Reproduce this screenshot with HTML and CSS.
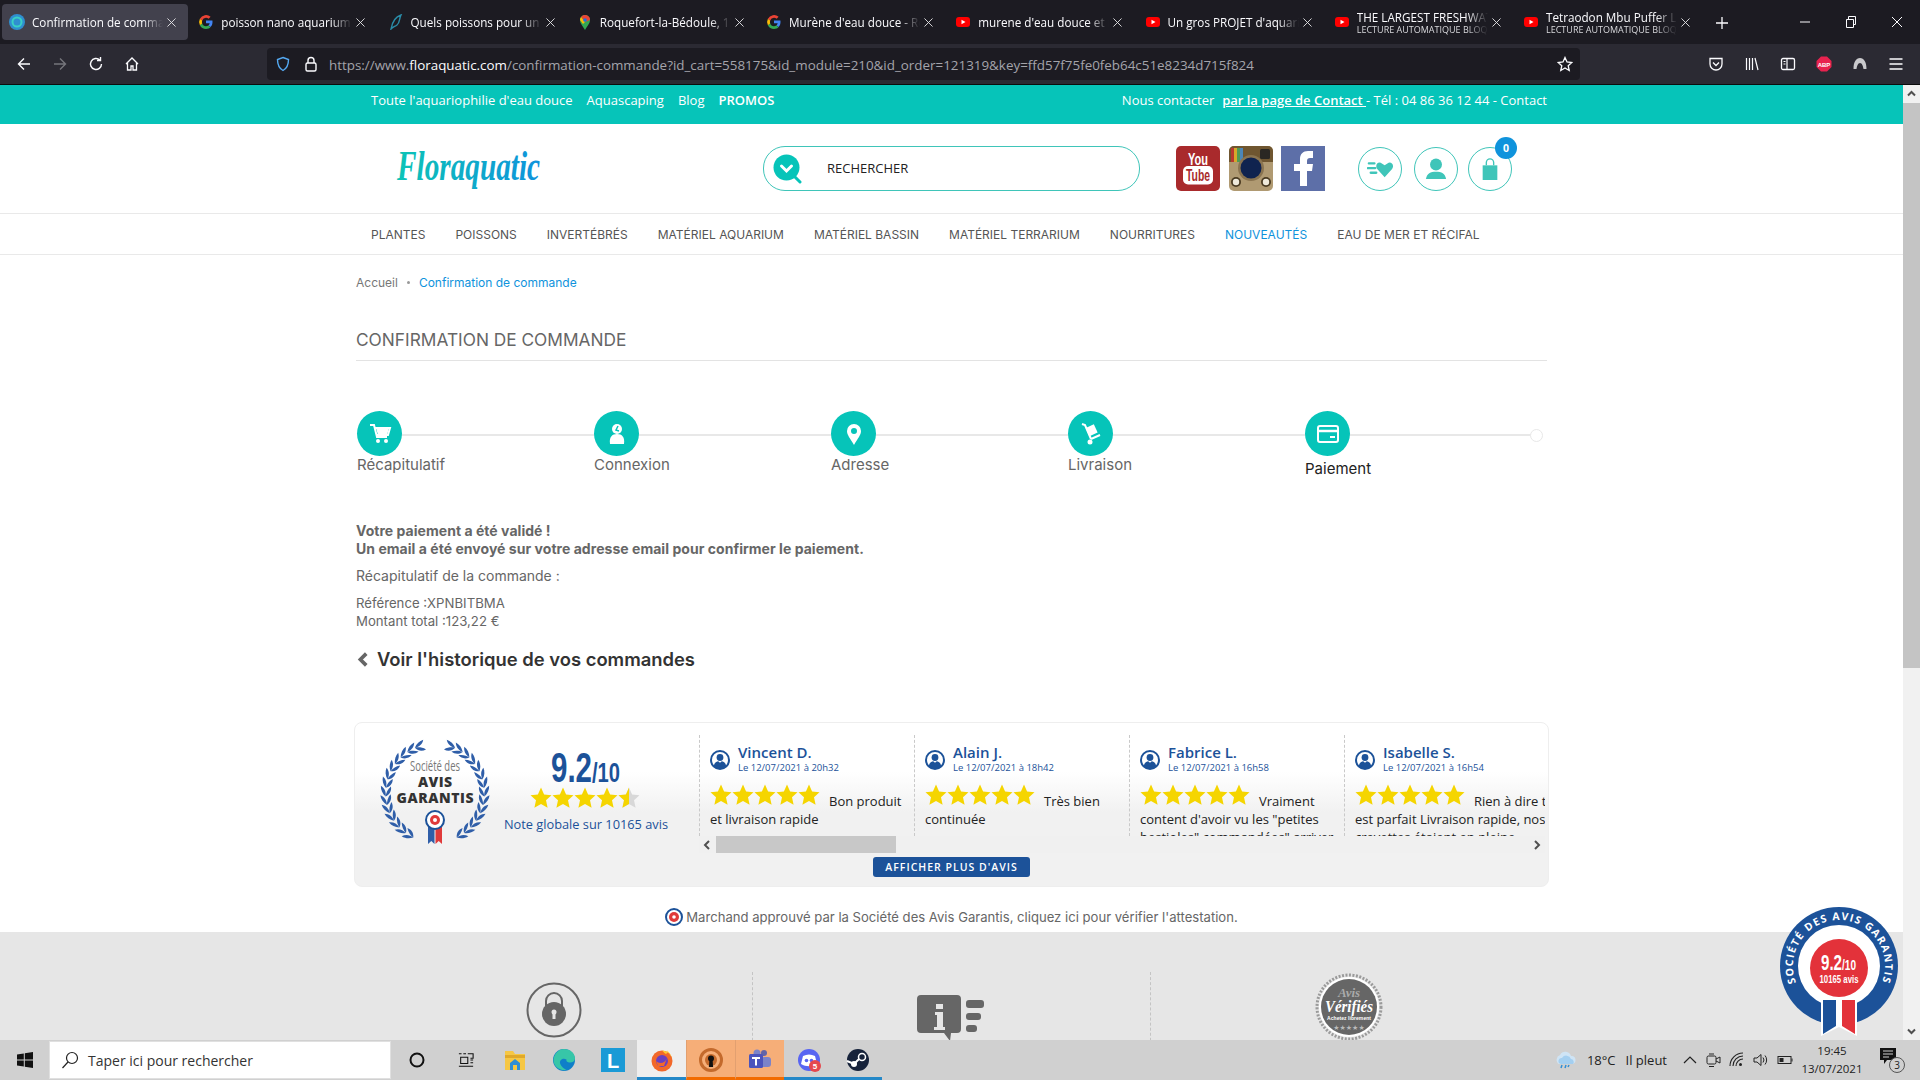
FILE: index.html
```html
<!DOCTYPE html>
<html lang="fr">
<head>
<meta charset="utf-8">
<title>Confirmation de commande</title>
<link rel="stylesheet" href="styles.css">
</head>
<body>
<svg class="sprite" aria-hidden="true">
  <defs>
    <linearGradient id="logo-grad" x1="0" x2="1" y1="0" y2="0"><stop offset="0" stop-color="#0cc4b6"/><stop offset="1" stop-color="#0f93dc"/></linearGradient>
    <clipPath id="half-star"><rect x="0" y="0" width="11" height="22"/></clipPath>
    <symbol id="tab-close" viewBox="0 0 10 10"><path d="M.5 .5l9 9M9.500 .5l-9 9" stroke="#e8e8ea" stroke-width="1" fill="none"/></symbol>
    <symbol id="fav-g" viewBox="0 0 16 16">
      <path d="M14.500 8c0-.5 0-1-.1-1.400H8v2.700h3.700a3.200 3.200 0 0 1-1.400 2.100l2.200 1.700c1.300-1.200 2-3 2-5.100z" fill="#4285f4"/>
      <path d="M8 15c1.900 0 3.500-.6 4.500-1.700l-2.200-1.700c-.6.4-1.400.7-2.300.7a4 4 0 0 1-3.800-2.800L1.900 11.200A7 7 0 0 0 8 15z" fill="#34a853"/>
      <path d="M4.200 9.500a4 4 0 0 1 0-3L1.900 4.800a7 7 0 0 0 0 6.400z" fill="#fbbc05"/>
      <path d="M8 3.800c1 0 1.900.4 2.600 1l2-2A7 7 0 0 0 1.900 4.800l2.300 1.700A4 4 0 0 1 8 3.800z" fill="#ea4335"/>
    </symbol>
    <symbol id="fav-yt" viewBox="0 0 16 16">
      <rect x="1" y="3" width="14" height="10" rx="3" fill="#f00"/><path d="M6.500 5.800v4.400L10.500 8z" fill="#fff"/>
    </symbol>
    <symbol id="star" viewBox="0 0 22 22">
      <path d="M11 .5l3.100 7 7.400.8-5.500 5 1.600 7.500L11 17l-6.600 3.800L6 13.300l-5.500-5 7.400-.8z" fill="#f5d500"/>
    </symbol>
    <symbol id="stars5" viewBox="0 0 110 22">
      <use href="#star" x="0" width="22" height="22"/><use href="#star" x="22" width="22" height="22"/><use href="#star" x="44" width="22" height="22"/><use href="#star" x="66" width="22" height="22"/><use href="#star" x="88" width="22" height="22"/>
    </symbol>
    <symbol id="rv-user" viewBox="0 0 20 20">
      <circle cx="10" cy="10" r="9" fill="none" stroke="#1c5299" stroke-width="2"/>
      <circle cx="10" cy="7.500" r="3.400" fill="#1c5299"/><path d="M3.800 16.500c.4-4 2.800-5 4.400-5.300l1.800 1.600 1.800-1.600c1.600.3 4 1.300 4.400 5.300a9 9 0 0 1-12.400 0z" fill="#1c5299"/>
    </symbol>
    <g id="leaf-pair"><path d="M56 .5c3-3 7-4.500 11-4-2.500 3.500-6.500 5-11 4z" fill="#2f5ea8"/><path d="M56 .5c3 .5 7 2.500 9.500 6-4.500 .5-8-2-9.500-6z" fill="#2f5ea8"/></g>
    <g id="laurel-side">
      <use href="#leaf-pair" transform="rotate(-24 56 50)"/><use href="#leaf-pair" transform="rotate(-34 56 50)"/><use href="#leaf-pair" transform="rotate(-44 56 50)"/><use href="#leaf-pair" transform="rotate(-54 56 50)"/><use href="#leaf-pair" transform="rotate(-64 56 50)"/><use href="#leaf-pair" transform="rotate(-74 56 50)"/><use href="#leaf-pair" transform="rotate(-84 56 50)"/><use href="#leaf-pair" transform="rotate(-94 56 50)"/><use href="#leaf-pair" transform="rotate(-104 56 50)"/><use href="#leaf-pair" transform="rotate(-114 56 50)"/><use href="#leaf-pair" transform="rotate(-124 56 50)"/><use href="#leaf-pair" transform="rotate(-134 56 50)"/><use href="#leaf-pair" transform="rotate(-144 56 50)"/><use href="#leaf-pair" transform="rotate(-154 56 50)"/>
    </g>
  </defs>
</svg>

<div class="screen">
  <header class="chrome">
    <div class="tabbar">
      <div class="tab tab-active">
        <svg class="fav" viewBox="0 0 16 16"><circle cx="8" cy="8" r="8" fill="#2f8fd0"/><circle cx="8" cy="8" r="4.500" fill="none" stroke="#39d0c4" stroke-width="2"/></svg>
        <span class="tab-title">Confirmation de commande</span><svg class="tab-x"><use href="#tab-close"/></svg>
      </div>
      <div class="tab"><svg class="fav"><use href="#fav-g"/></svg><span class="tab-title">poisson nano aquarium - Recherche</span><svg class="tab-x"><use href="#tab-close"/></svg></div>
      <div class="tab">
        <svg class="fav" viewBox="0 0 16 16"><path d="M3 15C4 9 7 3 13 1 11 5 12 9 9 11 7 12.500 5 13 3 15z" fill="none" stroke="#2a8ca8" stroke-width="1.400"/></svg>
        <span class="tab-title">Quels poissons pour un nano</span><svg class="tab-x"><use href="#tab-close"/></svg></div>
      <div class="tab">
        <svg class="fav" viewBox="0 0 16 16"><path d="M8 16C5 11 3 9 3 6a5 5 0 0 1 10 0c0 3-2 5-5 10z" fill="#34a853"/><path d="M4 3a5 5 0 0 1 9 3L8 8z" fill="#ea4335"/><path d="M3 6a5 5 0 0 1 1-3l4 5-2 2z" fill="#fbbc05"/><circle cx="8" cy="6" r="1.800" fill="#1a73e8"/></svg>
        <span class="tab-title">Roquefort-la-Bédoule, 13830</span><svg class="tab-x"><use href="#tab-close"/></svg></div>
      <div class="tab"><svg class="fav"><use href="#fav-g"/></svg><span class="tab-title">Murène d'eau douce - Recherche</span><svg class="tab-x"><use href="#tab-close"/></svg></div>
      <div class="tab"><svg class="fav"><use href="#fav-yt"/></svg><span class="tab-title">murene d'eau douce et marine</span><svg class="tab-x"><use href="#tab-close"/></svg></div>
      <div class="tab"><svg class="fav"><use href="#fav-yt"/></svg><span class="tab-title">Un gros PROJET d'aquarium</span><svg class="tab-x"><use href="#tab-close"/></svg></div>
      <div class="tab"><svg class="fav"><use href="#fav-yt"/></svg><span class="tab-title tab-two"><span class="tab-line">THE LARGEST FRESHWATER</span><span class="tab-sub">LECTURE AUTOMATIQUE BLOQUÉE</span></span><svg class="tab-x"><use href="#tab-close"/></svg></div>
      <div class="tab"><svg class="fav"><use href="#fav-yt"/></svg><span class="tab-title tab-two"><span class="tab-line">Tetraodon Mbu Puffer Large</span><span class="tab-sub">LECTURE AUTOMATIQUE BLOQUÉE</span></span><svg class="tab-x"><use href="#tab-close"/></svg></div>
      <svg class="newtab" viewBox="0 0 12 12"><path d="M6 0v12M0 6h12" stroke="#fbfbfe" stroke-width="1.300"/></svg>
      <div class="winctl">
        <svg class="win-btn" viewBox="0 0 46 20"><path d="M18 10h10" stroke="#fbfbfe"/></svg>
        <svg class="win-btn" viewBox="0 0 46 20"><path d="M18.500 7.500h7v8h-7zM20.500 7V4.500h7v8h-1.500" fill="none" stroke="#fbfbfe"/></svg>
        <svg class="win-btn" viewBox="0 0 46 20"><path d="M18 5l10 10M28 5L18 15" stroke="#fbfbfe"/></svg>
      </div>
    </div>
    <div class="toolbar">
      <svg class="tool" viewBox="0 0 16 16"><path d="M14 8H2.500M8 2.500L2.500 8 8 13.500" fill="none" stroke="#fbfbfe" stroke-width="1.400"/></svg>
      <svg class="tool" viewBox="0 0 16 16"><path d="M2 8h11.500M8 2.500L13.500 8 8 13.500" fill="none" stroke="#76767c" stroke-width="1.400"/></svg>
      <svg class="tool" viewBox="0 0 16 16"><path d="M13.500 8a5.500 5.500 0 1 1-1.700-4M12.500 1v3.500H9" fill="none" stroke="#fbfbfe" stroke-width="1.400"/></svg>
      <svg class="tool" viewBox="0 0 16 16"><path d="M2 8l6-6 6 6M3.500 7v7h3.500v-4h2v4h3.500V7" fill="none" stroke="#fbfbfe" stroke-width="1.300"/></svg>
      <div class="urlbar">
        <svg class="url-shield" viewBox="0 0 16 16"><path d="M8 1.500l5.500 2c0 5-1 8.500-5.500 11-4.500-2.500-5.500-6-5.500-11z" fill="none" stroke="#54a9f2" stroke-width="1.400"/></svg>
        <svg class="url-lock" viewBox="0 0 16 16"><rect x="3" y="7" width="10" height="8" rx="1.500" fill="none" stroke="#fbfbfe" stroke-width="1.400"/><path d="M5 7V4.500a3 3 0 0 1 6 0V7" fill="none" stroke="#fbfbfe" stroke-width="1.400"/></svg>
        <span class="url-text">https://www.<b class="url-host">floraquatic.com</b>/confirmation-commande?id_cart=558175&amp;id_module=210&amp;id_order=121319&amp;key=ffd57f75fe0feb64c51e8234d715f824</span>
        <svg class="url-star" viewBox="0 0 16 16"><path d="M8 1.500l2 4.500 4.800.5-3.600 3.200 1 4.800L8 12l-4.200 2.500 1-4.800L1.200 6.500 6 6z" fill="none" stroke="#fbfbfe" stroke-width="1.300"/></svg>
      </div>
      <div class="tool-right">
        <svg class="tool" viewBox="0 0 16 16"><path d="M2 2.500h12V8a6 6 0 0 1-12 0z" fill="none" stroke="#fbfbfe" stroke-width="1.300"/><path d="M5 6.500l3 3 3-3" fill="none" stroke="#fbfbfe" stroke-width="1.300"/></svg>
        <svg class="tool" viewBox="0 0 16 16"><path d="M2.500 2v12M5.500 2v12M8.500 2v12M11 2l3 12" fill="none" stroke="#fbfbfe" stroke-width="1.200"/></svg>
        <svg class="tool" viewBox="0 0 16 16"><rect x="1.500" y="2.500" width="13" height="11" rx="1.500" fill="none" stroke="#fbfbfe" stroke-width="1.300"/><path d="M7 2.500v11M3.500 5.500h2M3.500 8h2" stroke="#fbfbfe" stroke-width="1.200"/></svg>
        <svg class="tool" viewBox="0 0 16 16"><path d="M5 .5h6L15.500 5v6L11 15.500H5L.5 11V5z" fill="#e8224f"/><text x="8" y="10.500" class="abp-text" text-anchor="middle">ABP</text></svg>
        <svg class="tool" viewBox="0 0 16 16"><path d="M8 2c4 0 6.500 4 6.500 11h-3C11 10 10 7 8 7s-3 3-3.500 6h-3C1.500 6 4 2 8 2z" fill="#c9c9cc"/></svg>
        <svg class="tool" viewBox="0 0 16 16"><path d="M1.500 3h13M1.500 8h13M1.500 13h13" stroke="#fbfbfe" stroke-width="1.400"/></svg>
      </div>
    </div>
  </header>

  <div class="viewport">
    <main class="page">
      <div class="topbar">
        <div class="wrap topbar-in">
          <nav class="top-left"><a>Toute l'aquariophilie d'eau douce</a><a>Aquascaping</a><a>Blog</a><a class="strong">PROMOS</a></nav>
          <div class="top-right">Nous contacter&nbsp; <a class="strong under">par la page de Contact </a> - Tél : 04 86 36 12 44 - Contact</div>
        </div>
      </div>

      <div class="wrap site-head">
        <svg class="logo" viewBox="0 0 146 44"><text x="1" y="33" class="logo-text" textLength="143" lengthAdjust="spacingAndGlyphs" fill="url(#logo-grad)">Floraquatic</text></svg>
        <div class="search">
          <svg class="search-ico" viewBox="0 0 30 30"><path d="M20 21l7 7" stroke="#06c4b9" stroke-width="3" stroke-linecap="round"/><circle cx="13.500" cy="13.500" r="13" fill="#06c4b9"/><path d="M8.500 12l5 5 5-5" fill="none" stroke="#fff" stroke-width="3" stroke-linecap="round"/></svg>
          <span class="search-label">RECHERCHER</span>
        </div>
        <div class="social">
          <svg class="soc" viewBox="0 0 44 45"><rect width="44" height="45" rx="5" fill="#a92a2c"/><text x="22" y="18.500" class="yt-you" text-anchor="middle" textLength="20" lengthAdjust="spacingAndGlyphs">You</text><rect x="7" y="20" width="30" height="18.500" rx="5" fill="#fff"/><text x="22" y="35" class="yt-tube" text-anchor="middle" textLength="24" lengthAdjust="spacingAndGlyphs">Tube</text></svg>
          <svg class="soc" viewBox="0 0 44 45"><rect width="44" height="45" rx="5" fill="#b09a72"/><path d="M0 5a5 5 0 0 1 5-5h34a5 5 0 0 1 5 5v11H0z" fill="#6f5630"/><rect x="2" y="2" width="3" height="14" fill="#b8392f"/><rect x="5" y="2" width="3" height="14" fill="#d6a82a"/><rect x="8" y="2" width="3" height="14" fill="#4f9a55"/><rect x="11" y="2" width="3" height="14" fill="#4b86b8"/><rect x="31" y="3" width="10" height="10" rx="1.500" fill="#2a2723"/><circle cx="22" cy="22" r="13" fill="#8a7450"/><circle cx="22" cy="22" r="10.500" fill="#10234f"/><circle cx="7" cy="36" r="5" fill="#4a3b22"/><circle cx="7" cy="36" r="3.200" fill="#efeadb"/><circle cx="37" cy="36" r="5" fill="#4a3b22"/><circle cx="37" cy="36" r="3.200" fill="#efeadb"/></svg>
          <svg class="soc" viewBox="0 0 44 45"><rect width="44" height="45" fill="#5d6fa8"/><path d="M19 40V25h-6v-7h6v-5c0-5 3-8 8-8h5v7h-3c-2 0-3 1-3 3v3h6l-1 7h-5v15z" fill="#fff"/></svg>
        </div>
        <div class="actions">
          <div class="act"><svg class="act-ico" viewBox="0 0 28 20"><path d="M19 19L11 10c-3-4 1-9 5-6l3 2 3-2c4-3 8 2 5 6z" fill="#3fc5b9"/><path d="M2 4h6M1 9h8M4 14h6" stroke="#3fc5b9" stroke-width="2.500" stroke-linecap="round"/></svg></div>
          <div class="act"><svg class="act-ico" viewBox="0 0 28 24"><circle cx="14" cy="7" r="6.500" fill="#3fc5b9"/><path d="M3 23c1-6 5-8 11-8s10 2 11 8z" fill="#3fc5b9"/></svg></div>
          <div class="act act-cart"><svg class="act-ico" viewBox="0 0 28 24"><path d="M10 8V5a4 4 0 0 1 8 0v3" fill="none" stroke="#3fc5b9" stroke-width="1.500"/><rect x="6" y="8" width="16" height="16" fill="#3fc5b9"/></svg><span class="cart-count">0</span></div>
        </div>
      </div>

      <nav class="mainnav">
        <div class="wrap mainnav-in">
          <a>PLANTES</a><a>POISSONS</a><a>INVERTÉBRÉS</a><a>MATÉRIEL AQUARIUM</a><a>MATÉRIEL BASSIN</a><a>MATÉRIEL TERRARIUM</a><a>NOURRITURES</a><a class="nav-new">NOUVEAUTÉS</a><a>EAU DE MER ET RÉCIFAL</a>
        </div>
      </nav>

      <div class="wrap">
        <div class="crumbs"><a>Accueil</a><span class="crumb-dot"></span><a class="crumb-now">Confirmation de commande</a></div>
        <h1 class="title">CONFIRMATION DE COMMANDE</h1>

        <div class="steps">
          <div class="step"><span class="step-dot"><svg viewBox="0 0 24 24"><path d="M2 3h4l3 12h10M7 6h15l-2 7H9" fill="none" stroke="#fff" stroke-width="2"/><path d="M8 6h13l-2 7H10z" fill="#fff"/><circle cx="10" cy="19" r="2" fill="#fff"/><circle cx="18" cy="19" r="2" fill="#fff"/></svg></span><span class="step-label">Récapitulatif</span></div>
          <div class="step"><span class="step-dot"><svg viewBox="0 0 24 24"><circle cx="12" cy="7" r="5" fill="#fff"/><path d="M5 22c-1-7 2-10 7-10s8 3 7 10z" fill="#fff"/><path d="M13 4l-2 4 3 1" fill="none" stroke="#06c4b9" stroke-width="1.500"/></svg></span><span class="step-label">Connexion</span></div>
          <div class="step"><span class="step-dot"><svg viewBox="0 0 24 24"><path fill-rule="evenodd" d="M12 23C8 16 5 13 5 9a7 7 0 0 1 14 0c0 4-3 7-7 14zm0-11a3 3 0 1 0 0-6 3 3 0 0 0 0 6z" fill="#fff"/></svg></span><span class="step-label">Adresse</span></div>
          <div class="step"><span class="step-dot"><svg viewBox="0 0 24 24"><path d="M3 2l3 1 6 14" fill="none" stroke="#fff" stroke-width="2"/><rect x="8" y="4" width="9" height="9" transform="rotate(-25 12 8)" fill="#fff"/><path d="M12 17l9-4" stroke="#fff" stroke-width="2"/><circle cx="11" cy="20" r="2.500" fill="#fff"/></svg></span><span class="step-label">Livraison</span></div>
          <div class="step step-current"><span class="step-dot"><svg viewBox="0 0 24 24"><rect x="2" y="4" width="20" height="16" rx="2" fill="none" stroke="#fff" stroke-width="2"/><path d="M2 9h20" stroke="#fff" stroke-width="2.500"/><path d="M14 14h5v2h-5z" fill="#fff"/></svg></span><span class="step-label">Paiement</span></div>
          <span class="step-end"></span>
        </div>

        <section class="message">
          <p class="msg-strong">Votre paiement a été validé !<br>Un email a été envoyé sur votre adresse email pour confirmer le paiement.</p>
          <p class="msg-recap">Récapitulatif de la commande :</p>
          <p class="msg-lines">Référence :XPNBITBMA<br>Montant total :123,22 €</p>
          <a class="history"><svg class="history-ico" viewBox="0 0 10 14"><path d="M8.500 1.500L3 7l5.500 5.500" fill="none" stroke="#666" stroke-width="3.400"/></svg>Voir l'historique de vos commandes</a>
        </section>

        <section class="reviews">
          <div class="rv-top">
            <div class="rv-left">
              <svg class="laurel" viewBox="0 0 112 100">
                <use href="#laurel-side"/>
                <use href="#laurel-side" transform="matrix(-1 0 0 1 112 0)"/>
                <text x="56" y="28" class="lau-soc" text-anchor="middle" textLength="50" lengthAdjust="spacingAndGlyphs">Société des</text>
                <text x="56" y="44" class="lau-big" text-anchor="middle" textLength="34">AVIS</text>
                <text x="56" y="60" class="lau-big" text-anchor="middle" textLength="77">GARANTIS</text>
                <path d="M49 84h6.500v17l-3.200-3-3.300 3z" fill="#2f5ea8"/><path d="M56.500 84H63v17l-3.300-3-3.200 3z" fill="#e03a3a"/>
                <circle cx="56" cy="77" r="9" fill="#fff" stroke="#1c5299" stroke-width="2"/><circle cx="56" cy="77" r="5" fill="#e03a3a"/><circle cx="56" cy="77" r="2" fill="#fff"/>
              </svg>
              <div class="rv-score">
                <svg class="score-num" viewBox="0 0 70 42"><text x="0" y="37" class="score-big" textLength="41" lengthAdjust="spacingAndGlyphs">9.2</text><text x="41" y="37" class="score-small" textLength="28" lengthAdjust="spacingAndGlyphs">/10</text></svg>
                <svg class="score-stars" viewBox="0 0 110 22">
                  <use href="#star" width="22" height="22"/><use href="#star" x="22" width="22" height="22"/><use href="#star" x="44" width="22" height="22"/><use href="#star" x="66" width="22" height="22"/>
                  <g transform="translate(88 0)"><path d="M11 .5l3.100 7 7.400.8-5.500 5 1.600 7.500L11 17l-6.600 3.800L6 13.300l-5.500-5 7.400-.8z" fill="#d8d8d8"/><use href="#star" width="22" height="22" clip-path="url(#half-star)"/></g>
                </svg>
                <div class="score-note">Note globale sur 10165 avis</div>
              </div>
            </div>
            <div class="rv-right">
              <div class="rv-list">
                <article class="rv-card">
                  <div class="rv-head"><svg class="rv-avatar"><use href="#rv-user"/></svg><div><div class="rv-name">Vincent D.</div><div class="rv-date">Le 12/07/2021 à 20h32</div></div></div>
                  <p class="rv-text"><svg class="rv-stars"><use href="#stars5"/></svg>Bon produit<br>et livraison rapide</p>
                </article>
                <article class="rv-card">
                  <div class="rv-head"><svg class="rv-avatar"><use href="#rv-user"/></svg><div><div class="rv-name">Alain J.</div><div class="rv-date">Le 12/07/2021 à 18h42</div></div></div>
                  <p class="rv-text"><svg class="rv-stars"><use href="#stars5"/></svg>Très bien<br>continuée</p>
                </article>
                <article class="rv-card">
                  <div class="rv-head"><svg class="rv-avatar"><use href="#rv-user"/></svg><div><div class="rv-name">Fabrice L.</div><div class="rv-date">Le 12/07/2021 à 16h58</div></div></div>
                  <p class="rv-text"><svg class="rv-stars"><use href="#stars5"/></svg>Vraiment<br>content d'avoir vu les "petites<br>bestioles" commandées" arriver</p>
                </article>
                <article class="rv-card">
                  <div class="rv-head"><svg class="rv-avatar"><use href="#rv-user"/></svg><div><div class="rv-name">Isabelle S.</div><div class="rv-date">Le 12/07/2021 à 16h54</div></div></div>
                  <p class="rv-text"><svg class="rv-stars"><use href="#stars5"/></svg>Rien à dire tout<br>est parfait Livraison rapide, nos<br>crevettes étaient en pleine</p>
                </article>
              </div>
              <div class="rv-scroll">
                <svg class="rv-arrow" viewBox="0 0 8 10"><path d="M6 1L2 5l4 4" fill="none" stroke="#505050" stroke-width="2"/></svg>
                <span class="rv-thumb"></span>
                <svg class="rv-arrow rv-arrow-r" viewBox="0 0 8 10"><path d="M2 1l4 4-4 4" fill="none" stroke="#505050" stroke-width="2"/></svg>
              </div>
            </div>
          </div>
          <a class="rv-btn">AFFICHER PLUS D'AVIS</a>
        </section>

        <p class="attest">
          <svg class="attest-ico" viewBox="0 0 18 18"><circle cx="9" cy="9" r="8" fill="#fff" stroke="#1c5299" stroke-width="2"/><circle cx="9" cy="9" r="5" fill="#e03a3a"/><circle cx="9" cy="9" r="1.800" fill="#fff"/></svg>
          Marchand approuvé par la Société des Avis Garantis, cliquez ici pour vérifier l'attestation.
        </p>
      </div>

      <footer class="trust">
        <div class="wrap trust-in">
          <div class="trust-col">
            <svg class="ico-lock" viewBox="0 0 56 56"><circle cx="28" cy="28" r="26.500" fill="none" stroke="#666" stroke-width="2"/><path d="M20 26v-7a8 8 0 0 1 16 0v7" fill="none" stroke="#666" stroke-width="2"/><circle cx="28" cy="32" r="12" fill="#666"/><circle cx="28" cy="30" r="2.500" fill="#e6e6e6"/><path d="M26.500 30h3v7h-3z" fill="#e6e6e6"/></svg>
          </div>
          <div class="trust-col">
            <svg class="ico-info" viewBox="0 0 68 46"><path d="M4 0h36a4 4 0 0 1 4 4v30a4 4 0 0 1-4 4H34l-1 8-6-8H4a4 4 0 0 1-4-4V4a4 4 0 0 1 4-4z" fill="#666"/><rect x="19" y="9" width="7" height="5" fill="#e6e6e6"/><path d="M18 17h8v15h2v3H17v-3h3V20h-2z" fill="#e6e6e6"/><rect x="49" y="5" width="18" height="8" rx="3" fill="#666"/><rect x="49" y="18" width="15" height="7" rx="3" fill="#666"/><rect x="49" y="30" width="11" height="7" rx="3" fill="#666"/></svg>
          </div>
          <div class="trust-col">
            <svg class="ico-verif" viewBox="0 0 68 68"><circle cx="34" cy="34" r="32" fill="none" stroke="#9a9a9a" stroke-width="3" stroke-dasharray="2 1.500"/><circle cx="34" cy="34" r="30" fill="#fff"/><circle cx="34" cy="34" r="28" fill="#666"/><text x="34" y="24" class="verif-a" text-anchor="middle">Avis</text><text x="34" y="39" class="verif-b" text-anchor="middle" textLength="48" lengthAdjust="spacingAndGlyphs">Vérifiés</text><text x="34" y="47" class="verif-c" text-anchor="middle" textLength="44">Achetez librement</text><text x="34" y="57" class="verif-d" text-anchor="middle">★★★★★</text></svg>
          </div>
        </div>
      </footer>
    </main>

    <div class="vscroll">
      <svg class="vs-btn" viewBox="0 0 17 18"><path d="M5 10.500l3.500-3.500 3.500 3.500" fill="none" stroke="#505050" stroke-width="2"/></svg>
      <span class="vs-thumb"></span>
      <span class="vs-fill"></span>
      <svg class="vs-btn" viewBox="0 0 17 18"><path d="M5 7.500l3.500 3.500 3.500-3.500" fill="none" stroke="#505050" stroke-width="2"/></svg>
    </div>

    <svg class="float-badge" viewBox="0 0 120 132">
      <path id="badge-arc" d="M60 106A46 46 0 1 1 60 14A46 46 0 1 1 60 106" fill="none"/>
      <circle cx="60" cy="60" r="59" fill="#1c5299"/>
      <circle cx="60" cy="60" r="41" fill="#fff"/>
      <circle cx="60" cy="62" r="29" fill="#e3323a"/>
      <path d="M42 92h36v38l-18-9-18 9z" fill="#fff"/>
      <path d="M44 94h13v26l-13 8z" fill="#1c5299"/>
      <path d="M63 94h13v34l-13-8z" fill="#e3323a"/>
      <text class="badge-ring"><textPath href="#badge-arc" startOffset="50%" text-anchor="middle">SOCIÉTÉ DES AVIS GARANTIS</textPath></text>
      <text x="42" y="64" class="badge-big" textLength="21" lengthAdjust="spacingAndGlyphs">9.2</text>
      <text x="63" y="64" class="badge-sm" textLength="14" lengthAdjust="spacingAndGlyphs">/10</text>
      <text x="60" y="77" class="badge-note" text-anchor="middle" textLength="39" lengthAdjust="spacingAndGlyphs">10165 avis</text>
    </svg>
  </div>

  <footer class="taskbar">
    <div class="task-start"><svg class="task-ico" viewBox="0 0 16 16"><path d="M0 2.500L6.800 1.500V7.500H0zM7.800 1.300L16 0V7.500H7.800zM0 8.500H6.800V14.500L0 13.500zM7.800 8.500H16V16L7.800 14.700z" fill="#111"/></svg></div>
    <div class="task-search">
      <svg class="task-mag" viewBox="0 0 18 18"><circle cx="11" cy="7" r="5.500" fill="none" stroke="#222" stroke-width="1.200"/><path d="M7 11l-5.500 6" stroke="#222" stroke-width="1.200"/></svg>
      <span class="task-search-text">Taper ici pour rechercher</span>
    </div>
    <div class="task-apps">
      <div class="task-cell"><svg class="task-ico" viewBox="0 0 16 16"><circle cx="8" cy="8" r="6.500" fill="none" stroke="#111" stroke-width="2"/></svg></div>
      <div class="task-cell"><svg class="task-ico" viewBox="0 0 18 18"><path d="M1 2h3M6 2h3M11 2h6v5h-3M1 16h16M3 6h8v7H3zM14 9h3M14 12h3" fill="none" stroke="#111" stroke-width="1.200"/></svg></div>
      <div class="task-cell"><svg class="task-ico-l" viewBox="0 0 24 24"><path d="M2 3h8l2 3h10v16H2z" fill="#f6c744"/><path d="M2 7h20v3H2z" fill="#e0a92a"/><path d="M7 22v-7l5-4 5 4v7z" fill="#2f8fd6"/><rect x="10" y="17" width="4" height="5" fill="#f6c744"/></svg></div>
      <div class="task-cell"><svg class="task-ico-l" viewBox="0 0 24 24"><circle cx="12" cy="12" r="11" fill="#0f7fc9"/><path d="M1.500 11C3 4 8 1 12 1c6 0 11 4 11 9.500 0 3-3 4.500-6 4-2-.4-3-1.500-2.500-3-4-2-8 1-6 5 1 2 3 4 6 5.500C7 23 1 18 1.500 11z" fill="#37c6a8"/></svg></div>
      <div class="task-cell"><svg class="task-ico-l" viewBox="0 0 24 24"><rect width="24" height="24" fill="#1a9ad6"/><text x="12" y="20" class="task-l" text-anchor="middle">L</text></svg></div>
      <div class="task-cell task-light task-under-b"><svg class="task-ico-l" viewBox="0 0 24 24"><circle cx="12" cy="13" r="10.500" fill="#f2682a"/><path d="M12 2.500c5 0 10 4 10 10 0-3-1-7-5-10 1 2 0 4-2 3z" fill="#ffcb2f"/><circle cx="12" cy="13" r="6" fill="#6b3fc0"/><path d="M6 13c3 3 9 3 11-3l-3 8H8z" fill="#f2682a"/></svg></div>
      <div class="task-cell task-orange task-under-o"><svg class="task-ico-l" viewBox="0 0 24 24"><circle cx="12" cy="12" r="10.500" fill="none" stroke="#c46a2c" stroke-width="3"/><circle cx="12" cy="12" r="6" fill="#c46a2c"/><circle cx="12" cy="10.500" r="3" fill="#111"/><path d="M10.500 11h3l.6 8h-4.200z" fill="#111"/></svg></div>
      <div class="task-cell task-orange task-under-o"><svg class="task-ico-l" viewBox="0 0 24 24"><circle cx="16" cy="5" r="3" fill="#6264a7"/><rect x="13" y="9" width="10" height="10" rx="3" fill="#7b83c9"/><circle cx="9" cy="5" r="3.500" fill="#7b83c9"/><rect x="1" y="6" width="14" height="14" rx="1.500" fill="#4b53bc"/><path d="M4 9h8v2H9v6.500H7V11H4z" fill="#fff"/></svg></div>
      <div class="task-cell task-under-b"><svg class="task-ico-l" viewBox="0 0 24 24"><circle cx="12" cy="12" r="11" fill="#5865f2"/><path d="M6 8c4-2 8-2 12 0l2 8c-5 3-11 3-16 0z" fill="#fff"/><circle cx="9.500" cy="12.500" r="1.800" fill="#5865f2"/><circle cx="14.500" cy="12.500" r="1.800" fill="#5865f2"/><circle cx="18" cy="18" r="6" fill="#e5484d"/><text x="18" y="21" class="task-5" text-anchor="middle">5</text></svg></div>
      <div class="task-cell task-under-b"><svg class="task-ico-l" viewBox="0 0 24 24"><circle cx="12" cy="12" r="11" fill="#16223a"/><circle cx="16" cy="9" r="3.500" fill="none" stroke="#fff" stroke-width="1.500"/><circle cx="8" cy="16" r="3" fill="#fff"/><path d="M1 13l6 2.500M9 15l4-4" stroke="#fff" stroke-width="2"/></svg></div>
    </div>
    <div class="tray">
      <svg class="tray-weather" viewBox="0 0 24 20"><path d="M6 14a5 5 0 0 1 1-9 6 6 0 0 1 11 1 4 4 0 0 1 1 8z" fill="#cfe4f5"/><path d="M8 14a3 3 0 0 1 1-6 5 5 0 0 1 9 1 3 3 0 0 1 2 5z" fill="#a4cff0"/><path d="M9 15l-1 3M13 15l-1 3M16 15l-1 2" stroke="#2f8fd6" stroke-width="1.500"/></svg>
      <span class="tray-temp">18°C</span><span class="tray-rain">Il pleut</span>
      <svg class="tray-ico tray-chev" viewBox="0 0 14 14"><path d="M1 10l6-6 6 6" fill="none" stroke="#222" stroke-width="1.200"/></svg>
      <svg class="tray-ico" viewBox="0 0 16 16"><rect x="2" y="4" width="9" height="8" rx="1.500" fill="none" stroke="#222"/><path d="M11 7l4-2v6l-4-2M4 2h5M4 14.500h5" fill="none" stroke="#222"/></svg>
      <svg class="tray-ico" viewBox="0 0 16 16"><path d="M1 14a13 13 0 0 1 13-13M4 14a10 10 0 0 1 10-10M7 14a7 7 0 0 1 7-7" fill="none" stroke="#222" stroke-width="1.100"/><circle cx="11.500" cy="12.500" r="1.500" fill="#222"/></svg>
      <svg class="tray-ico" viewBox="0 0 16 16"><path d="M1 6h3l4-3.500v11L4 10H1z" fill="none" stroke="#222"/><path d="M10 5.500a4 4 0 0 1 0 5M12 3.500a7 7 0 0 1 0 9" fill="none" stroke="#222"/></svg>
      <svg class="tray-ico" viewBox="0 0 16 16"><rect x="1" y="4.500" width="13" height="7" fill="none" stroke="#222"/><rect x="2.500" y="6" width="4" height="4" fill="#222"/><path d="M15 6.500v3" stroke="#222"/></svg>
      <div class="tray-clock"><span>19:45</span><span>13/07/2021</span></div>
      <div class="tray-notif"><svg class="notif-ico" viewBox="0 0 18 18"><path d="M1 1h16v12H8l-3 4v-4H1z" fill="#111"/><path d="M4 4h10M4 7h10M4 10h6" stroke="#d0d0d0"/></svg><span class="notif-count">3</span></div>
    </div>
  </footer>
</div>
</body>
</html>
```

FILE: styles.css
```css
* { box-sizing: border-box; }
html, body { margin: 0; height: 100%; overflow: hidden; }
body { font-family: Inter, "Liberation Sans", sans-serif; color: #666; background: #fff; }
a { color: inherit; text-decoration: none; }
p, h1 { margin: 0; }
.sprite { position: absolute; width: 0; height: 0; }
.screen { display: flex; flex-direction: column; height: 1080px; width: 1920px; }

/* browser chrome */
.chrome { flex: none; font-family: "Open Sans", "Noto Sans", sans-serif; }
.tabbar { height: 44px; background: #1c1b22; display: flex; align-items: flex-start; padding: 4px 0 0 2px; gap: 3.25px; }
.tab { width: 186px; height: 36px; display: flex; align-items: center; padding-left: 7px; border-radius: 4px; color: #fbfbfe; font-size: 11.7px; flex: none; }
.tab-active { background: #42414d; }
.fav { width: 16px; height: 16px; flex: none; }
.tab-title { margin-left: 7px; width: 131px; overflow: hidden; white-space: nowrap; -webkit-mask-image: linear-gradient(90deg, #000 84%, transparent); mask-image: linear-gradient(90deg, #000 84%, transparent); }
.tab-two { display: flex; flex-direction: column; line-height: 14px; padding-top: 2px; }
.tab-sub { font-size: 9px; line-height: 12px; color: #d8d8dc; }
.tab-x { margin-left: 4px; width: 9px; height: 9px; flex: none; }
.newtab { width: 12px; height: 12px; margin: 13px 0 0 11px; flex: none; }
.winctl { margin-left: auto; display: flex; align-self: center; margin-top: -4px; }
.win-btn { width: 46px; height: 20px; display: block; }
.toolbar { height: 41px; background: #2b2a33; border-bottom: 1px solid #0c0c0d; display: flex; align-items: center; padding: 0 6px; }
.tool { width: 36px; height: 16px; flex: none; }
.urlbar { margin-left: 117px; width: 1313px; height: 32px; background: #1c1b22; border-radius: 4px; display: flex; align-items: center; padding-left: 8px; flex: none; }
.url-shield { width: 16px; height: 16px; flex: none; }
.url-lock { width: 16px; height: 16px; margin-left: 12px; flex: none; }
.url-text { margin-left: 10px; padding-top: 2px; font-size: 13.4px; color: #a4a4ab; white-space: nowrap; }
.url-host { color: #fbfbfe; font-weight: 400; }
.url-star { width: 16px; height: 16px; margin-left: auto; margin-right: 7px; flex: none; }
.tool-right { margin-left: 118px; display: flex; flex: none; }
.abp-text { font: 700 6px "Liberation Sans", sans-serif; fill: #fff; }

/* page */
.viewport { flex: 1; display: flex; min-height: 0; position: relative; }
.page { flex: 1; min-width: 0; overflow: hidden; }
.wrap { width: 1191px; margin: 0 auto; }
.topbar { height: 39px; background: #06c4b9; color: #fff; font: 13px/31px "Open Sans", sans-serif; }
.topbar-in { display: flex; justify-content: space-between; padding-left: 15px; }
.top-left { display: flex; gap: 14px; }
.strong { font-weight: 600; }
.under { text-decoration: underline; margin-left: 1px; }

.site-head { height: 89px; display: flex; align-items: center; }
.logo { width: 146px; height: 44px; margin-left: 40px; flex: none; }
.logo-text { font: italic 700 42px "Liberation Serif", serif; }
.search { margin-left: 221px; width: 377px; height: 45px; flex: none; border: 1px solid #3fc5b9; border-radius: 22px; display: flex; align-items: center; padding-left: 9px; }
.search-ico { width: 30px; height: 30px; flex: none; }
.search-label { margin-left: 24px; margin-top: -2px; font: 13px "Open Sans", sans-serif; color: #222; }
.social { margin-left: 36px; display: flex; gap: 8.5px; flex: none; }
.soc { width: 44px; height: 45px; display: block; }
.yt-you { font: 700 17px "Liberation Sans", sans-serif; fill: #fff; }
.yt-tube { font: 700 16px "Liberation Sans", sans-serif; fill: #a92a2c; }
.actions { margin-left: 33px; display: flex; gap: 12px; flex: none; }
.act { width: 44px; height: 44px; border: 1px solid #3fc5b9; border-radius: 50%; display: flex; align-items: center; justify-content: center; position: relative; }
.act-cart { margin-left: -2px; }
.act-ico { width: 26px; height: 22px; }
.cart-count { position: absolute; top: -11px; right: -6px; width: 22px; height: 22px; border-radius: 50%; background: #0f93dc; color: #fff; font: 700 10.5px/22px "Open Sans", sans-serif; text-align: center; }

.mainnav { height: 42px; border-top: 1px solid #e9e9e9; border-bottom: 1px solid #e9e9e9; }
.mainnav-in { display: flex; gap: 30px; padding-left: 15px; font-size: 12px; line-height: 41px; color: #555; white-space: nowrap; }
.nav-new { color: #0f93dc; }

.crumbs { margin-top: 19px; height: 16px; display: flex; align-items: center; font-size: 12px; color: #777; }
.crumb-dot { width: 3px; height: 3px; border-radius: 50%; background: #999; margin: 0 9px; }
.crumb-now { color: #0f93dc; }
.title { margin-top: 38px; font-size: 17.3px; font-weight: 400; line-height: 24px; padding-bottom: 8px; border-bottom: 1px solid #e3e3e3; color: #666; }

.steps { margin-top: 50px; padding-left: 1px; display: flex; position: relative; height: 68px; }
.steps::before { content: ""; position: absolute; left: 20px; right: 10px; top: 23px; height: 2px; background: #e8e8e8; }
.step { width: 237px; flex: none; position: relative; display: flex; flex-direction: column; align-items: flex-start; }
.step-dot { width: 45px; height: 45px; border-radius: 50%; background: #06c4b9; display: flex; align-items: center; justify-content: center; }
.step-dot svg { width: 24px; height: 24px; }
.step-label { font-size: 15px; line-height: 18px; color: #666; }
.step-current .step-label { margin-top: 4px; color: #222; }
.step-end { position: absolute; right: 4px; top: 18px; width: 13px; height: 13px; border-radius: 50%; background: #fff; border: 1px solid #e8e8e8; }

.message { font-size: 14px; color: #666; }
.msg-strong { margin-top: 43px; font-weight: 700; line-height: 17.5px; letter-spacing: .04px; white-space: nowrap; }
.msg-recap { margin-top: 10px; line-height: 18px; }
.msg-lines { margin-top: 9px; line-height: 18px; font-size: 13.2px; }
.history { margin-top: 17px; display: flex; align-items: center; font-size: 18.4px; font-weight: 600; line-height: 24px; color: #333; }
.history-ico { width: 11px; height: 15px; margin: 0 9px 0 1px; flex: none; }

/* review widget */
.reviews { margin: 51px -2px 0; border: 1px solid #eee; border-radius: 8px; height: 165px; background: linear-gradient(#fff 30%, #f1f1f1 55%); font-family: "Open Sans", sans-serif; display: flex; flex-direction: column; }
.rv-top { height: 130px; display: flex; flex: none; }
.rv-left { width: 344px; flex: none; display: flex; padding: 20px 0 0 24px; }
.laurel { width: 112px; height: 100px; flex: none; overflow: visible; }
.lau-soc { font: 14px "Open Sans", sans-serif; fill: #777; }
.lau-big { font: 800 14px "Open Sans", sans-serif; fill: #333; }
.rv-score { margin-left: 12px; width: 166px; display: flex; flex-direction: column; align-items: center; padding-top: 2px; flex: none; }
.score-num { width: 70px; height: 42px; display: block; }
.score-big { font: 700 42px "Liberation Sans", sans-serif; fill: #1c5299; }
.score-small { font: 700 27px "Liberation Sans", sans-serif; fill: #1c5299; }
.score-stars { width: 110px; height: 22px; display: block; margin-left: -2px; }
.score-note { margin-top: 6px; font-size: 12.8px; line-height: 18px; color: #1c5299; white-space: nowrap; }
.rv-right { width: 846px; flex: none; padding-top: 12px; display: flex; flex-direction: column; }
.rv-list { display: flex; height: 101px; overflow: hidden; flex: none; }
.rv-card { width: 215px; flex: none; border-left: 1px dashed #c9c9c9; padding: 10px 0 0 10px; }
.rv-head { display: flex; gap: 8px; align-items: center; height: 30px; }
.rv-avatar { width: 20px; height: 20px; flex: none; }
.rv-name { font-size: 15px; font-weight: 600; line-height: 16px; color: #1c5299; }
.rv-date { font-size: 9.5px; line-height: 16px; color: #1c5299; }
.rv-text { margin-top: 9px; font-size: 13px; line-height: 18px; color: #222; white-space: nowrap; }
.rv-stars { width: 110px; height: 22px; margin-right: 9px; display: inline-block; }
.rv-scroll { height: 17px; background: #f0f0f0; display: flex; align-items: center; flex: none; }
.rv-arrow { width: 8px; height: 10px; margin-left: 4px; flex: none; }
.rv-arrow-r { margin-left: 637px; }
.rv-thumb { width: 180px; height: 17px; background: #c8c8c8; margin-left: 5px; flex: none; }
.rv-btn { margin: 4px auto 0; width: 157px; height: 20px; background: #1c5299; border-radius: 3px; color: #fff; font-size: 10.5px; font-weight: 600; line-height: 20px; letter-spacing: 1px; text-align: center; }

.attest { margin-top: 21px; height: 18px; display: flex; align-items: center; justify-content: center; gap: 3px; font-size: 13.1px; line-height: 18px; color: #666; }
.attest-ico { width: 18px; height: 18px; flex: none; }

.trust { margin-top: 6px; background: #e6e6e6; height: 200px; padding-top: 40px; }
.trust-in { display: flex; height: 160px; }
.trust-col { flex: 1; display: flex; justify-content: center; align-items: flex-start; border-left: 1px dashed #c4c4c4; }
.trust-col:first-child { border-left: 0; }
.ico-lock { width: 56px; height: 56px; margin-top: 10px; }
.ico-info { width: 68px; height: 46px; margin-top: 23px; }
.ico-verif { width: 68px; height: 68px; margin-top: 1px; }
.verif-a { font: italic 700 13px "Liberation Serif", serif; fill: #aaa; }
.verif-b { font: italic 700 17px "Liberation Serif", serif; fill: #fff; }
.verif-c { font: 700 5px "Liberation Sans", sans-serif; fill: #fff; }
.verif-d { font: 7px "DejaVu Sans", sans-serif; fill: #bbb; }

.vscroll { width: 17px; flex: none; background: #f1f1f1; display: flex; flex-direction: column; }
.vs-btn { width: 17px; height: 18px; flex: none; display: block; }
.vs-thumb { height: 565px; background: #c4c4c4; flex: none; }
.vs-fill { flex: 1; }

.float-badge { position: absolute; left: 1779px; top: 821px; width: 120px; height: 132px; }
.badge-ring { font: 700 10.5px "Open Sans", sans-serif; fill: #fff; letter-spacing: 1.3px; }
.badge-big { font: 700 22px "Liberation Sans", sans-serif; fill: #fff; }
.badge-sm { font: 700 14px "Liberation Sans", sans-serif; fill: #fff; }
.badge-note { font: 700 11px "Liberation Sans", sans-serif; fill: #fff; }

/* taskbar */
.taskbar { height: 40px; flex: none; background: #d0d0d0; display: flex; align-items: stretch; font-family: "Open Sans", sans-serif; color: #222; position: relative; }
.task-start { width: 49px; display: flex; align-items: center; justify-content: center; flex: none; }
.task-ico { width: 16px; height: 16px; }
.task-search { width: 342px; margin: 1px 0; background: #fff; display: flex; align-items: center; padding-left: 11px; flex: none; border: 1px solid #e0e0e0; }
.task-mag { width: 18px; height: 18px; flex: none; }
.task-search-text { margin-left: 9px; font-size: 14px; color: #333; }
.task-apps { display: flex; margin-left: 1px; flex: none; }
.task-cell { width: 49px; display: flex; align-items: center; justify-content: center; }
.task-ico-l { width: 24px; height: 24px; }
.task-light { background: #eee; }
.task-orange { background: #f6ae78; border-left: 1px solid #e2a070; }
.task-under-b { border-bottom: 3px solid #2488c8; padding-top: 3px; }
.task-under-o { border-bottom: 3px solid #f26b00; padding-top: 3px; }
.task-l { font: 700 20px "Liberation Sans", sans-serif; fill: #fff; }
.task-5 { font: 700 8px "Liberation Sans", sans-serif; fill: #fff; }
.tray { margin-left: auto; display: flex; align-items: center; flex: none; padding-right: 15px; }
.tray-weather { width: 24px; height: 20px; flex: none; }
.tray-temp { margin-left: 10px; font-size: 13px; }
.tray-rain { margin-left: 10px; font-size: 13px; }
.tray-ico { width: 16px; height: 16px; margin-left: 8px; flex: none; }
.tray-chev { margin-left: 16px; width: 14px; height: 14px; }
.tray-clock { margin-left: 1px; width: 76px; display: flex; flex-direction: column; align-items: center; font-size: 11.5px; line-height: 18px; }
.tray-notif { margin-left: 9px; width: 26px; height: 26px; position: relative; }
.notif-ico { width: 18px; height: 18px; display: block; }
.notif-count { position: absolute; right: 0; bottom: 0; width: 16px; height: 16px; border: 1px solid #555; border-radius: 50%; font-size: 10px; line-height: 14px; text-align: center; background: #d0d0d0; }
```
